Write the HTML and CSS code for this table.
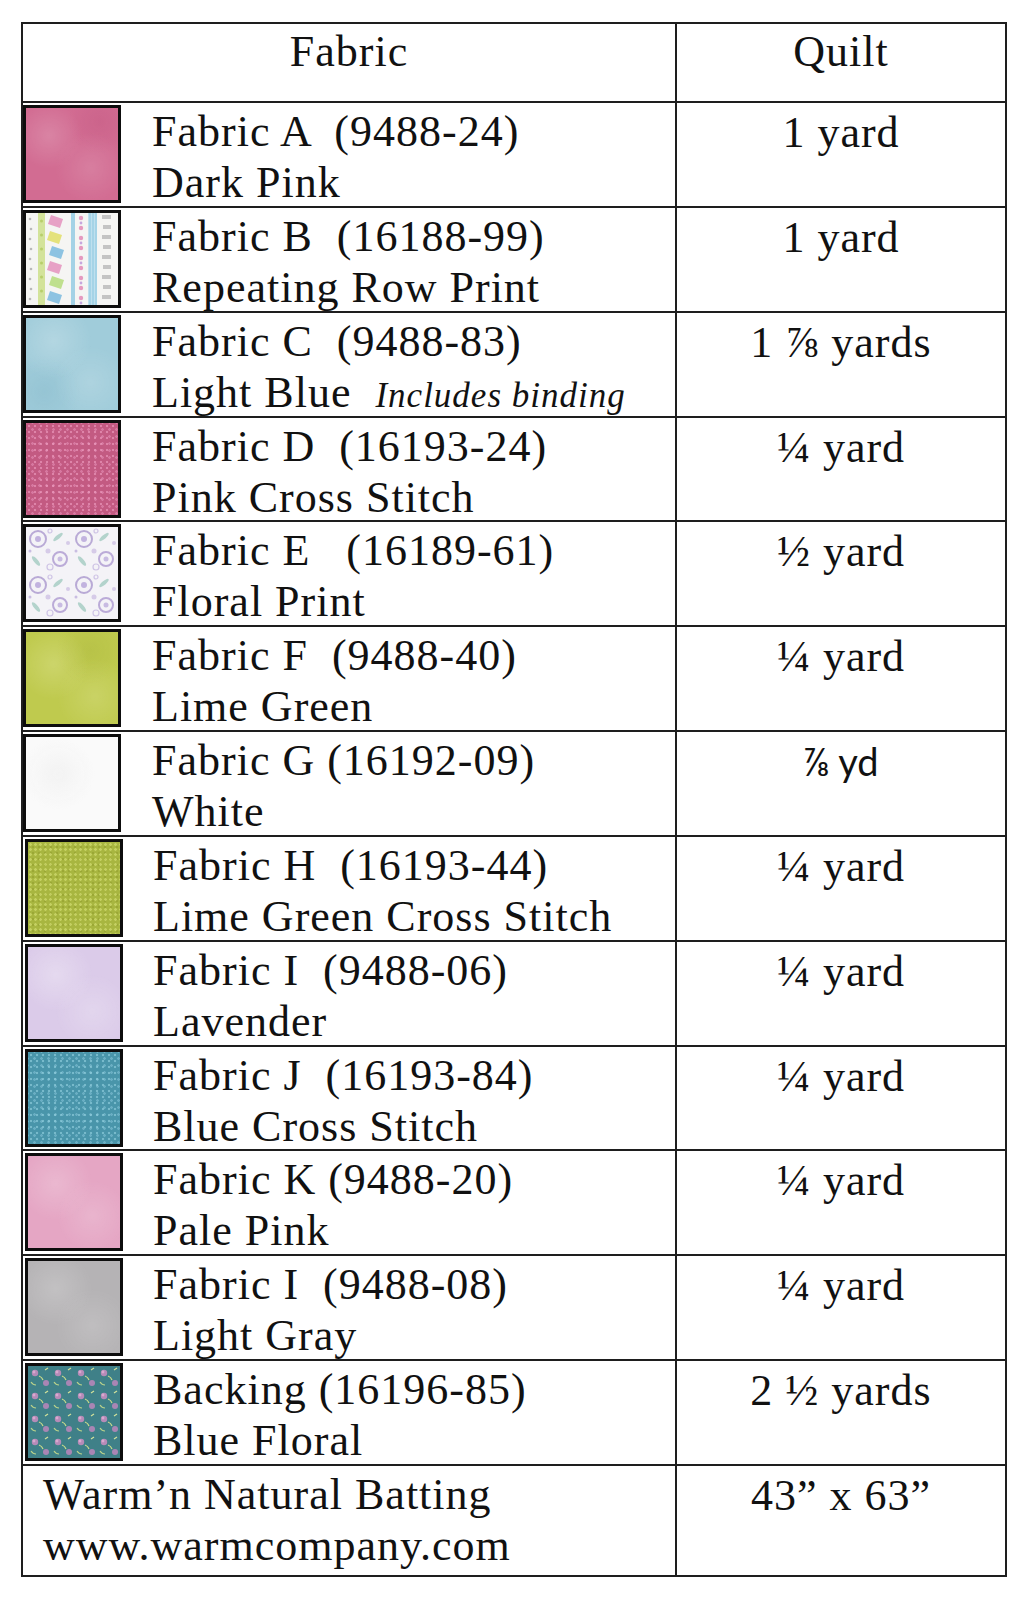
FILE: index.html
```html
<!DOCTYPE html>
<html lang="en">
<head>
<meta charset="utf-8">
<title>Fabric Requirements</title>
<link rel="stylesheet" href="styles.css">
</head>
<body>
<table class="fabric-table">
  <colgroup><col class="col-fabric"><col class="col-quilt"></colgroup>
  <thead>
    <tr class="head-row"><th>Fabric</th><th>Quilt</th></tr>
  </thead>
  <tbody>
    <tr>
      <td class="fabric-cell"><div class="fabric">
        <span class="swatch mottled pink-dark"></span>
        <div class="label"><div class="name">Fabric A  (9488-24)</div><div>Dark Pink</div></div>
      </div></td>
      <td class="qty">1 yard</td>
    </tr>
    <tr>
      <td class="fabric-cell"><div class="fabric">
        <span class="swatch">
          <svg viewBox="0 0 92 92" width="92" height="92">
            <rect width="92" height="92" fill="#f5f5f3"/>
            <g fill="#b9b9b9"><circle cx="4" cy="6" r="1.3"/><circle cx="5" cy="16" r="1.3"/><circle cx="4" cy="26" r="1.3"/><circle cx="5" cy="36" r="1.3"/><circle cx="4" cy="46" r="1.3"/><circle cx="5" cy="56" r="1.3"/><circle cx="4" cy="66" r="1.3"/><circle cx="5" cy="76" r="1.3"/><circle cx="4" cy="86" r="1.3"/></g>
            <rect x="12" width="7" height="92" fill="#d3e39a"/>
            <g fill="#b7cf6a"><circle cx="15.5" cy="8" r="1.5"/><circle cx="15.5" cy="22" r="1.5"/><circle cx="15.5" cy="36" r="1.5"/><circle cx="15.5" cy="50" r="1.5"/><circle cx="15.5" cy="64" r="1.5"/><circle cx="15.5" cy="78" r="1.5"/></g>
            <g>
              <path d="M25 2 l12 4 l-3 9 l-12 -4z" fill="#e7a1c6"/>
              <path d="M24 18 l12 4 l-3 9 l-12 -4z" fill="#e4e27c"/>
              <path d="M26 33 l12 4 l-3 9 l-12 -4z" fill="#8dc3e2"/>
              <path d="M24 48 l12 4 l-3 9 l-12 -4z" fill="#e7a1c6"/>
              <path d="M26 63 l12 4 l-3 9 l-12 -4z" fill="#bfe08e"/>
              <path d="M24 78 l12 4 l-3 9 l-12 -4z" fill="#8dc3e2"/>
            </g>
            <rect x="45" width="4" height="92" fill="#a3d2e6"/>
            <g fill="#e59ac0"><circle cx="55" cy="5" r="2.2"/><circle cx="55" cy="15" r="2.2"/><circle cx="55" cy="25" r="2.2"/><circle cx="55" cy="35" r="2.2"/><circle cx="55" cy="45" r="2.2"/><circle cx="55" cy="55" r="2.2"/><circle cx="55" cy="65" r="2.2"/><circle cx="55" cy="75" r="2.2"/><circle cx="55" cy="85" r="2.2"/></g>
            <g fill="#c6a6de"><circle cx="55" cy="10" r="1.4"/><circle cx="55" cy="30" r="1.4"/><circle cx="55" cy="50" r="1.4"/><circle cx="55" cy="70" r="1.4"/><circle cx="55" cy="90" r="1.4"/></g>
            <rect x="62" width="9" height="92" fill="#bfe0ee"/>
            <g stroke="#8cc7df" stroke-width="1"><path d="M64 0v92M67 0v92M70 0v92"/></g>
            <g fill="#c4c4c4"><rect x="76" y="2" width="9" height="4"/><rect x="77" y="12" width="8" height="4"/><rect x="76" y="22" width="9" height="4"/><rect x="77" y="32" width="8" height="4"/><rect x="76" y="42" width="9" height="4"/><rect x="77" y="52" width="8" height="4"/><rect x="76" y="62" width="9" height="4"/><rect x="77" y="72" width="8" height="4"/><rect x="76" y="82" width="9" height="4"/></g>
          </svg>
        </span>
        <div class="label"><div class="name">Fabric B  (16188-99)</div><div>Repeating Row Print</div></div>
      </div></td>
      <td class="qty">1 yard</td>
    </tr>
    <tr>
      <td class="fabric-cell"><div class="fabric">
        <span class="swatch mottled blue-light"></span>
        <div class="label"><div class="name">Fabric C  (9488-83)</div><div>Light Blue  <em class="note">Includes binding</em></div></div>
      </div></td>
      <td class="qty">1 ⅞ yards</td>
    </tr>
    <tr>
      <td class="fabric-cell"><div class="fabric">
        <span class="swatch speckled pink-cross"></span>
        <div class="label"><div class="name">Fabric D  (16193-24)</div><div>Pink Cross Stitch</div></div>
      </div></td>
      <td class="qty">¼ yard</td>
    </tr>
    <tr>
      <td class="fabric-cell"><div class="fabric">
        <span class="swatch">
          <svg viewBox="0 0 92 92" width="92" height="92">
            <defs>
              <pattern id="flor" width="46" height="46" patternUnits="userSpaceOnUse">
                <rect width="46" height="46" fill="#f4f3f7"/>
                <circle cx="12" cy="12" r="8" fill="none" stroke="#b9aad6" stroke-width="2"/>
                <circle cx="12" cy="12" r="3" fill="#c2b3df"/>
                <circle cx="34" cy="32" r="7" fill="none" stroke="#bbabd8" stroke-width="2"/>
                <circle cx="34" cy="32" r="2.5" fill="#c8bbe2"/>
                <ellipse cx="32" cy="10" rx="6" ry="2" fill="#b3d3cc" transform="rotate(-40 32 10)"/>
                <ellipse cx="10" cy="34" rx="6" ry="2" fill="#b3d3cc" transform="rotate(50 10 34)"/>
                <circle cx="22" cy="24" r="2.5" fill="#d6cbe8"/>
                <circle cx="42" cy="16" r="2" fill="#d6cbe8"/>
                <circle cx="4" cy="24" r="1.5" fill="#c9bde2"/>
                <circle cx="24" cy="40" r="3" fill="none" stroke="#cfc4e6" stroke-width="1.2"/>
                <circle cx="24" cy="4" r="2" fill="none" stroke="#cfc4e6" stroke-width="1.2"/>
              </pattern>
            </defs>
            <rect width="92" height="92" fill="url(#flor)"/>
          </svg>
        </span>
        <div class="label"><div class="name">Fabric E   (16189-61)</div><div>Floral Print</div></div>
      </div></td>
      <td class="qty">½ yard</td>
    </tr>
    <tr>
      <td class="fabric-cell"><div class="fabric">
        <span class="swatch mottled lime"></span>
        <div class="label"><div class="name">Fabric F  (9488-40)</div><div>Lime Green</div></div>
      </div></td>
      <td class="qty">¼ yard</td>
    </tr>
    <tr>
      <td class="fabric-cell"><div class="fabric">
        <span class="swatch mottled white"></span>
        <div class="label"><div class="name">Fabric G (16192-09)</div><div>White</div></div>
      </div></td>
      <td class="qty sans">⅞ yd</td>
    </tr>
    <tr>
      <td class="fabric-cell"><div class="fabric shift">
        <span class="swatch speckled lime-cross"></span>
        <div class="label"><div class="name">Fabric H  (16193-44)</div><div>Lime Green Cross Stitch</div></div>
      </div></td>
      <td class="qty">¼ yard</td>
    </tr>
    <tr>
      <td class="fabric-cell"><div class="fabric shift">
        <span class="swatch mottled lavender"></span>
        <div class="label"><div class="name">Fabric I  (9488-06)</div><div>Lavender</div></div>
      </div></td>
      <td class="qty">¼ yard</td>
    </tr>
    <tr>
      <td class="fabric-cell"><div class="fabric shift">
        <span class="swatch speckled blue-cross"></span>
        <div class="label"><div class="name">Fabric J  (16193-84)</div><div>Blue Cross Stitch</div></div>
      </div></td>
      <td class="qty">¼ yard</td>
    </tr>
    <tr>
      <td class="fabric-cell"><div class="fabric shift">
        <span class="swatch mottled pink-pale"></span>
        <div class="label"><div class="name">Fabric K (9488-20)</div><div>Pale Pink</div></div>
      </div></td>
      <td class="qty">¼ yard</td>
    </tr>
    <tr>
      <td class="fabric-cell"><div class="fabric shift">
        <span class="swatch mottled gray"></span>
        <div class="label"><div class="name">Fabric I  (9488-08)</div><div>Light Gray</div></div>
      </div></td>
      <td class="qty">¼ yard</td>
    </tr>
    <tr>
      <td class="fabric-cell"><div class="fabric shift">
        <span class="swatch">
          <svg viewBox="0 0 92 92" width="92" height="92">
            <defs>
              <pattern id="back" width="23" height="23" patternUnits="userSpaceOnUse">
                <rect width="23" height="23" fill="#3f8088"/>
                <circle cx="7" cy="7" r="3.2" fill="#b68bb8"/>
                <circle cx="6" cy="6" r="1.4" fill="#d9a9cf"/>
                <circle cx="18" cy="17" r="3" fill="#a985b4"/>
                <path d="M11 10 q3 1 4 4" stroke="#c9dc8a" stroke-width="1.2" fill="none"/>
                <path d="M3 16 q2 3 5 3" stroke="#bcd48a" stroke-width="1.2" fill="none"/>
                <path d="M17 4 l3 -2" stroke="#d4e39a" stroke-width="1.2"/>
              </pattern>
            </defs>
            <rect width="92" height="92" fill="url(#back)"/>
          </svg>
        </span>
        <div class="label"><div class="name">Backing (16196-85)</div><div>Blue Floral</div></div>
      </div></td>
      <td class="qty">2 ½ yards</td>
    </tr>
    <tr class="batting">
      <td class="batting-cell"><div class="batting-text"><div>Warm’n Natural Batting</div><div>www.warmcompany.com</div></div></td>
      <td class="qty">43” x 63”</td>
    </tr>
  </tbody>
</table>
</body>
</html>
```

FILE: styles.css
```css
html, body {
  margin: 0;
  padding: 0;
  background: #ffffff;
}

body {
  padding: 22px 0 0 21px;
  font-family: "Liberation Serif", "Times New Roman", serif;
  color: #111111;
}

.fabric-table {
  border-collapse: collapse;
  width: 984px;
  table-layout: fixed;
  font-size: 44px;
  line-height: 51px;
  letter-spacing: 1px;
}

.col-fabric { width: 654px; }
.col-quilt { width: 330px; }

.fabric-table th,
.fabric-table td {
  border: 2px solid #1e1e1e;
  padding: 0;
  vertical-align: top;
}

.head-row {
  height: 79px;
}

.head-row th {
  font-weight: normal;
  text-align: center;
  padding-top: 2px;
}

.fabric-table tbody tr {
  height: 104.85px;
}

.fabric-table tbody tr.batting {
  height: 111px;
}

.fabric-cell {
  padding: 1px 0 0 2px;
}

.fabric {
  display: flex;
  align-items: flex-start;
  gap: 31px;
  height: 98px;
}

.fabric.shift {
  padding-left: 2px;
  gap: 30px;
}

.swatch {
  flex: none;
  display: block;
  width: 92px;
  height: 92px;
  border: 3px solid #0d0d0d;
  margin-top: 2px;
  background: #f3f3f3;
}

.swatch svg {
  display: block;
}

.label {
  white-space: pre;
  padding-top: 3px;
}

.note {
  font-size: 35px;
  letter-spacing: 1px;
}

.qty {
  text-align: center;
  padding-top: 4px !important;
}

.qty.sans {
  font-family: Lato, "Liberation Sans", sans-serif;
  font-size: 38px;
  letter-spacing: 0;
}

.batting-cell {
  padding: 0 0 0 20px !important;
}

.batting-text {
  height: 100px;
  padding-top: 3px;
}

/* Mottled solid fabrics */
.pink-dark {
  background:
    radial-gradient(circle at 25% 30%, rgba(255,255,255,0.16), transparent 35%),
    radial-gradient(circle at 70% 65%, rgba(255,255,255,0.12), transparent 40%),
    radial-gradient(circle at 80% 15%, rgba(150,30,80,0.1), transparent 30%),
    #d26c92;
}

.blue-light {
  background:
    radial-gradient(circle at 30% 25%, rgba(255,255,255,0.2), transparent 40%),
    radial-gradient(circle at 70% 70%, rgba(255,255,255,0.14), transparent 40%),
    radial-gradient(circle at 20% 80%, rgba(60,130,160,0.1), transparent 35%),
    #a0ccda;
}

.lime {
  background:
    radial-gradient(circle at 30% 35%, rgba(255,255,220,0.2), transparent 40%),
    radial-gradient(circle at 75% 70%, rgba(255,255,220,0.16), transparent 40%),
    radial-gradient(circle at 70% 20%, rgba(120,130,20,0.1), transparent 35%),
    #bfca4e;
}

.white {
  background:
    radial-gradient(circle at 35% 40%, rgba(230,230,230,0.35), transparent 45%),
    #fafafa;
}

.lavender {
  background:
    radial-gradient(circle at 30% 30%, rgba(255,255,255,0.28), transparent 40%),
    radial-gradient(circle at 70% 70%, rgba(255,255,255,0.2), transparent 40%),
    #dbcbe9;
}

.pink-pale {
  background:
    radial-gradient(circle at 30% 30%, rgba(255,255,255,0.2), transparent 40%),
    radial-gradient(circle at 70% 65%, rgba(255,255,255,0.16), transparent 40%),
    #e5a6c4;
}

.gray {
  background:
    radial-gradient(circle at 30% 30%, rgba(255,255,255,0.18), transparent 40%),
    radial-gradient(circle at 70% 70%, rgba(255,255,255,0.14), transparent 40%),
    #b5b3b5;
}

/* Speckled cross-stitch fabrics */
.pink-cross {
  background:
    radial-gradient(circle, rgba(240,160,195,0.6) 1px, transparent 1.6px) 0 0 / 6px 6px,
    radial-gradient(circle, rgba(235,150,190,0.5) 1px, transparent 1.6px) 3px 3px / 7px 7px,
    #c35a82;
}

.lime-cross {
  background:
    radial-gradient(circle, rgba(215,225,120,0.6) 1px, transparent 1.6px) 0 0 / 5px 5px,
    radial-gradient(circle, rgba(140,150,40,0.45) 1px, transparent 1.6px) 2px 2px / 6px 6px,
    #a8b640;
}

.blue-cross {
  background:
    radial-gradient(circle, rgba(150,210,225,0.6) 1px, transparent 1.6px) 0 0 / 6px 6px,
    radial-gradient(circle, rgba(140,200,220,0.5) 1px, transparent 1.6px) 3px 3px / 7px 7px,
    #4995aa;
}
```
